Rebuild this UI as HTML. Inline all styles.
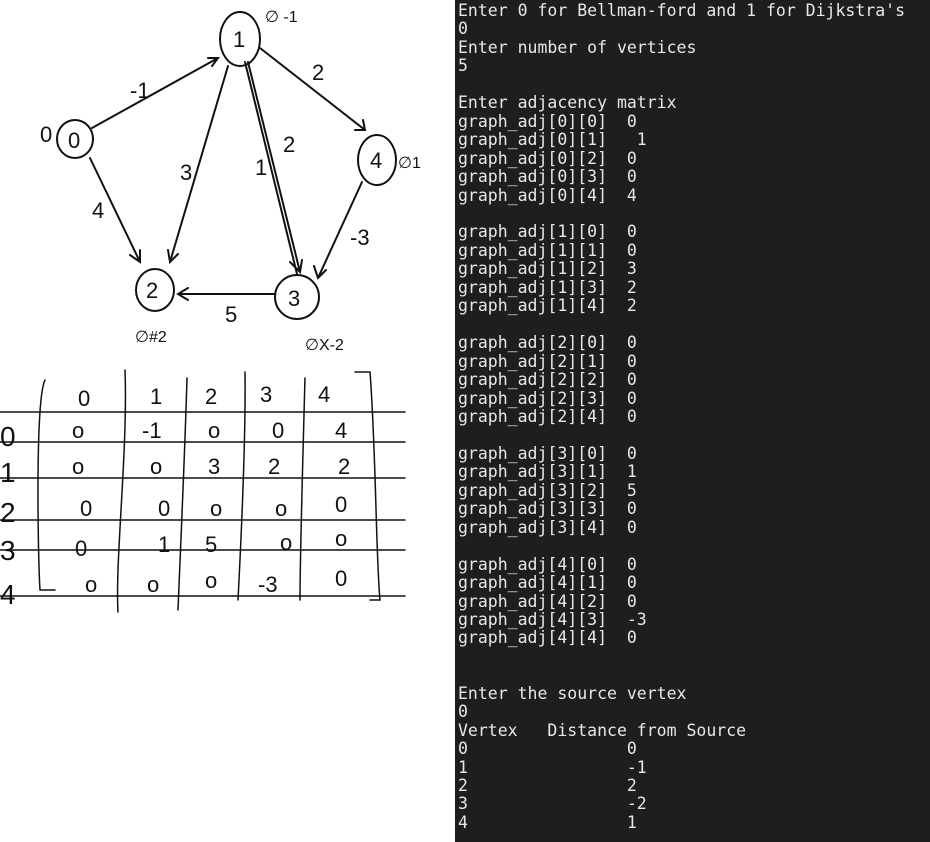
<!DOCTYPE html>
<html><head><style>
html,body{margin:0;padding:0;width:930px;height:842px;overflow:hidden;background:#fff}
#t{position:absolute;left:455px;top:0;width:475px;height:842px;background:#1e1e1e}
pre{margin:0;position:absolute;left:3px;top:2px;font-family:"DejaVu Sans Mono",monospace;font-size:16.5px;line-height:18.45px;color:#e8e8e8}
svg{position:absolute;left:0;top:0}
</style></head><body>
<svg width="455" height="842" viewBox="0 0 455 842" fill="none" stroke="#111" stroke-width="2" stroke-linecap="round" font-family="Liberation Sans,sans-serif">
<ellipse cx="240" cy="39" rx="20" ry="27"/>
<ellipse cx="75" cy="139" rx="18" ry="19"/>
<ellipse cx="377" cy="160" rx="19" ry="25"/>
<ellipse cx="155" cy="290" rx="19" ry="21"/>
<ellipse cx="297" cy="297" rx="22" ry="22"/>
<path d="M92 128 L218 58 M208 58l10 0-6 8"/>
<path d="M260 48 L365 130 M355 130l10 0 -2-10"/>
<path d="M228 66 L170 262 M168 250l2 12 8-8"/>
<path d="M248 62 L300 272 M245 62l52 212 M290 262l10 10 2-12"/>
<path d="M362 182 L318 278 M314 266l4 12 8-8"/>
<path d="M90 158 L140 262 M130 255l10 7 0-12"/>
<path d="M275 294 L178 294 M188 288l-10 6 10 6"/>
<g fill="#111" stroke="none" font-size="22">
<text x="233" y="47">1</text><text x="68" y="148">0</text><text x="370" y="168">4</text>
<text x="146" y="298">2</text><text x="288" y="306">3</text>
<text x="40" y="142">0</text><text x="130" y="98">-1</text><text x="312" y="80">2</text>
<text x="180" y="180">3</text><text x="255" y="175">1</text><text x="283" y="152">2</text>
<text x="92" y="218">4</text><text x="350" y="245">-3</text><text x="225" y="322">5</text>
<text x="265" y="22" font-size="16">∅ -1</text><text x="398" y="168" font-size="16">∅1</text>
<text x="135" y="342" font-size="16">∅#2</text><text x="305" y="350" font-size="16">∅X-2</text>
</g>
<g stroke-width="1.5">
<path d="M0 412H405M0 442H405M0 478H405M0 520H405M0 550H405M0 596H405"/>
<path d="M45 380C35 400 38 560 40 590M40 590h15"/>
<path d="M125 370C128 450 115 560 118 612M187 378C185 450 180 560 178 610M245 372C246 450 240 560 238 600M305 378C303 450 300 560 300 600"/>
<path d="M355 372h15C376 450 376 560 380 600h-10"/>
</g>
<g fill="#111" stroke="none" font-size="22">
<text x="78" y="406">0</text><text x="150" y="404">1</text><text x="205" y="404">2</text><text x="260" y="402">3</text><text x="318" y="402">4</text>
<g font-size="28"><text x="0" y="446">0</text><text x="0" y="482">1</text><text x="0" y="522">2</text><text x="0" y="560">3</text><text x="0" y="604">4</text></g>
<text x="72" y="438">o</text><text x="142" y="438">-1</text><text x="208" y="438">o</text><text x="272" y="438">0</text><text x="335" y="438">4</text>
<text x="72" y="474">o</text><text x="150" y="474">o</text><text x="208" y="474">3</text><text x="268" y="474">2</text><text x="338" y="474">2</text>
<text x="80" y="516">0</text><text x="158" y="516">0</text><text x="210" y="516">o</text><text x="275" y="516">o</text><text x="335" y="512">0</text>
<text x="75" y="556">0</text><text x="158" y="552">1</text><text x="205" y="552">5</text><text x="280" y="550">o</text><text x="335" y="546">o</text>
<text x="85" y="592">o</text><text x="147" y="592">o</text><text x="205" y="588">o</text><text x="258" y="592">-3</text><text x="335" y="586">0</text>
</g>
</svg>
<div id="t"><pre>Enter 0 for Bellman-ford and 1 for Dijkstra's
0
Enter number of vertices
5

Enter adjacency matrix
graph_adj[0][0]  0
graph_adj[0][1]   1
graph_adj[0][2]  0
graph_adj[0][3]  0
graph_adj[0][4]  4

graph_adj[1][0]  0
graph_adj[1][1]  0
graph_adj[1][2]  3
graph_adj[1][3]  2
graph_adj[1][4]  2

graph_adj[2][0]  0
graph_adj[2][1]  0
graph_adj[2][2]  0
graph_adj[2][3]  0
graph_adj[2][4]  0

graph_adj[3][0]  0
graph_adj[3][1]  1
graph_adj[3][2]  5
graph_adj[3][3]  0
graph_adj[3][4]  0

graph_adj[4][0]  0
graph_adj[4][1]  0
graph_adj[4][2]  0
graph_adj[4][3]  -3
graph_adj[4][4]  0


Enter the source vertex
0
Vertex   Distance from Source
0                0
1                -1
2                2
3                -2
4                1</pre></div>
</body></html>
